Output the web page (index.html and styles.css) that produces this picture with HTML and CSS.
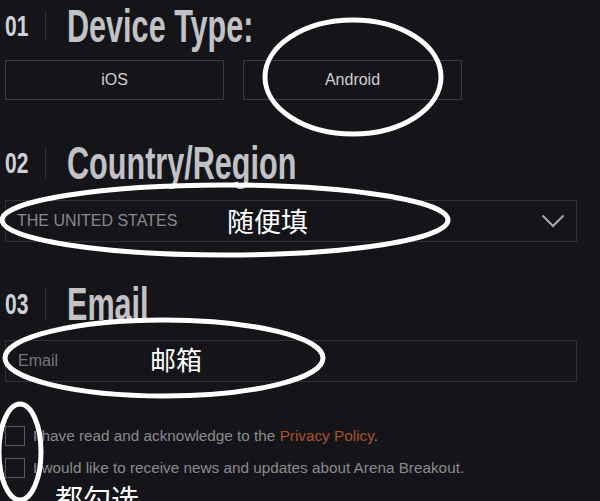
FILE: index.html
```
<!DOCTYPE html>
<html lang="en">
<head>
    <meta charset="UTF-8">
    <meta name="viewport" content="width=device-width, initial-scale=1.0">
    <title>Arena Breakout Registration</title>
    <link rel="stylesheet" href="styles.css">
</head>
<body>
    <div class="page">
        <section class="step step-device">
            <div class="step-head">
                <span class="step-num">01</span>
                <span class="step-bar"></span>
                <h2 class="step-title">Device Type:</h2>
            </div>
            <div class="device-list">
                <button class="device">iOS</button>
                <button class="device">Android</button>
            </div>
        </section>

        <section class="step step-country">
            <div class="step-head">
                <span class="step-num">02</span>
                <span class="step-bar"></span>
                <h2 class="step-title">Country/Region</h2>
            </div>
            <div class="select">
                <span class="select-value">THE UNITED STATES</span>
                <svg class="select-arrow" width="24" height="14" viewBox="0 0 24 14">
                    <polyline points="1.5,1.5 12,12 22.5,1.5" fill="none" stroke="#a9a9ad" stroke-width="2"/>
                </svg>
            </div>
        </section>

        <section class="step step-email">
            <div class="step-head">
                <span class="step-num">03</span>
                <span class="step-bar"></span>
                <h2 class="step-title">Email</h2>
            </div>
            <div class="field">
                <span class="field-placeholder">Email</span>
            </div>
        </section>

        <div class="agree">
            <label class="agree-row">
                <span class="checkbox"></span>
                <span class="agree-text">I have read and acknowledge to the <a class="policy">Privacy Policy</a>.</span>
            </label>
            <label class="agree-row">
                <span class="checkbox"></span>
                <span class="agree-text">I would like to receive news and updates about Arena Breakout.</span>
            </label>
        </div>

        <!-- hand drawn marks on top of the form -->
        <svg class="marks" width="600" height="501" viewBox="0 0 600 501">
            <g fill="none" stroke="#fff" stroke-width="5">
                <ellipse cx="353" cy="77" rx="88" ry="57"/>
                <ellipse cx="225" cy="220" rx="223" ry="35"/>
                <ellipse cx="164" cy="358" rx="159" ry="38"/>
                <ellipse cx="20" cy="452" rx="21" ry="48"/>
            </g>
        </svg>
        <span class="note note-country">随便填</span>
        <span class="note note-email">邮箱</span>
        <span class="note note-agree">都勾选</span>
    </div>
</body>
</html>
```

FILE: styles.css
```
body {
    margin: 0;
    background: #151519;
    font-family: "Liberation Sans", Arial, sans-serif;
    color: #c4c4c6;
    overflow: hidden;
}

.page {
    position: relative;
    width: 600px;
    height: 501px;
    padding: 0 23px 0 5px;
    box-sizing: border-box;
}

.step-head {
    display: flex;
    align-items: center;
    height: 52px;
}

.step-num {
    width: 40px;
    font-weight: bold;
    font-size: 30px;
    line-height: 1;
    color: #cdd1d8;
    transform: scaleX(0.7);
    transform-origin: left center;
}

.step-bar {
    width: 1px;
    height: 30px;
    background: #34343a;
}

.step-title {
    margin: 0 0 0 21px;
    font-size: 46px;
    font-weight: bold;
    line-height: 52px;
    color: #c1c2c5;
    white-space: nowrap;
    transform: scaleX(0.665);
    transform-origin: left center;
}

.step-device .step-head {
    margin-bottom: 8px;
}

.device-list {
    display: flex;
    gap: 19px;
}

.device {
    width: 219px;
    height: 40px;
    padding: 0;
    background: transparent;
    border: 1px solid #3a3a40;
    color: #d0d0d2;
    font-family: inherit;
    font-size: 16px;
    cursor: pointer;
}

.step-country {
    margin-top: 37px;
}

.step-country .step-head {
    margin-bottom: 11px;
}

.select,
.field {
    display: flex;
    align-items: center;
    height: 42px;
    padding: 0 11px;
    border: 1px solid #303036;
    box-sizing: border-box;
}

.select {
    justify-content: space-between;
}

.select-value {
    font-size: 16px;
    color: #88888d;
}

.step-email {
    margin-top: 36px;
}

.step-email .step-head {
    margin-bottom: 10px;
}

.field-placeholder {
    font-size: 16px;
    color: #75757a;
    padding-left: 1px;
}

.agree {
    margin-top: 43px;
    display: flex;
    flex-direction: column;
    gap: 11px;
}

.agree-row {
    display: flex;
    align-items: center;
    gap: 8px;
    height: 21px;
    font-size: 15.3px;
    color: #8a8a8e;
}

.checkbox {
    flex: none;
    width: 20px;
    height: 20px;
    border: 1px solid #58585d;
    box-sizing: border-box;
}

.policy {
    color: #a9522b;
}

.marks {
    position: absolute;
    top: 0;
    left: 0;
    pointer-events: none;
}

.note {
    position: absolute;
    font-family: "Noto Sans CJK SC", "Noto Sans", sans-serif;
    font-size: 27px;
    line-height: 1;
    color: #fff;
    white-space: nowrap;
}

.note-country {
    left: 227px;
    top: 207px;
}

.note-email {
    left: 150px;
    top: 346px;
    font-size: 26px;
}

.note-agree {
    left: 55px;
    top: 484px;
    font-size: 28px;
}
```
